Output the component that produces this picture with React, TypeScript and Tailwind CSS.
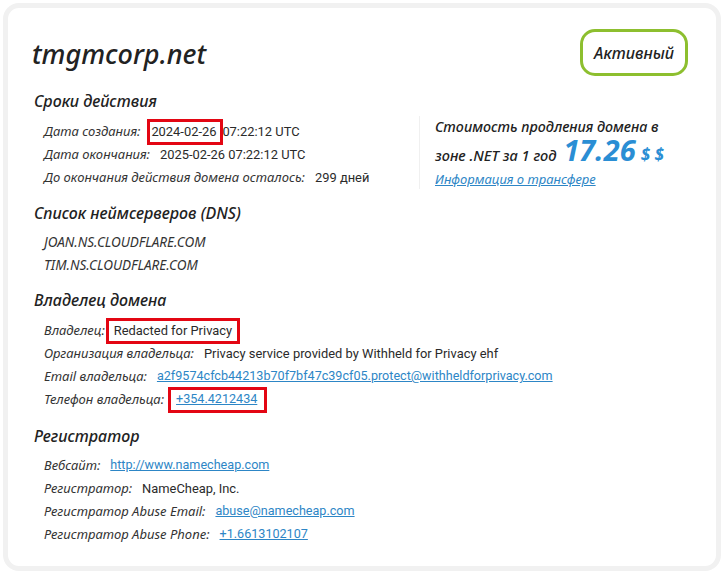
import React from "react";

const labelCls = "italic text-[#333] text-[13px] whitespace-nowrap [font-family:'Noto_Sans',sans-serif]";
const valCls = "text-[#2a2a2a] text-[12.9px] whitespace-nowrap [font-family:Roboto,sans-serif]";
const linkCls = "text-[#2d86c6] underline text-[12.6px] whitespace-nowrap [font-family:Roboto,sans-serif]";

function Row({ label, children }: { label: string; children: React.ReactNode }) {
  return (
    <div className="flex items-center h-[23px] gap-[10px]">
      <span className={labelCls}>{label}</span>
      {children}
    </div>
  );
}

function Heading({ children }: { children: React.ReactNode }) {
  return (
    <div className="h-[24px] flex items-center pl-[2px] italic text-[16px] font-medium text-[#222] [font-family:'Noto_Sans',sans-serif]">
      {children}
    </div>
  );
}

function RedBox({ children, className = "" }: { children: React.ReactNode; className?: string }) {
  return (
    <span className={"border-[3px] border-[#e30613] flex items-center whitespace-nowrap shrink-0 h-[26px] " + className}>
      {children}
    </span>
  );
}

export default function App() {
  return (
    <div className="w-[724px] h-[575px] bg-white pt-[3px] pl-[3px]">
      <div className="w-[718px] h-[568px] border-[5px] border-[#f1f1f1] rounded-[16px] bg-white pl-[24px] pr-[28px] pt-[21px]">
        <div className="flex items-center justify-between">
          <div className="mt-[2px] italic font-medium text-[27px] leading-[36px] text-[#222] [font-family:'Noto_Sans',sans-serif]">
            tmgmcorp.net
          </div>
          <div className="w-[108px] h-[47px] border-[3px] border-[#8dbf2f] rounded-[15px] flex items-center justify-center italic font-medium text-[16px] text-[#222] [font-family:'Noto_Sans',sans-serif]">
            Активный
          </div>
        </div>

        <div className="mt-[13px]">
          <Heading>Сроки действия</Heading>
          <div className="flex mt-[7px]">
            <div className="w-[387px] pl-[12px]">
              <div className="flex items-center h-[23px] gap-[7px]">
                <span className={labelCls}>Дата создания:</span>
                <span className="flex items-center">
                  <RedBox className="w-[76px] pl-[1px]"><span className={valCls}>2024-02-26</span></RedBox>
                  <span className={valCls + " -ml-[1px]"}>07:22:12 UTC</span>
                </span>
              </div>
              <Row label="Дата окончания:"><span className={valCls}>2025-02-26 07:22:12 UTC</span></Row>
              <Row label="До окончания действия домена осталось:"><span className={valCls}>299 дней</span></Row>
            </div>
            <div className="border-l border-[#f0f0f0] pl-[15px] -mt-[4px] h-[73px] flex flex-col">
              <div className="italic font-medium text-[14.3px] text-[#222] leading-[22px] whitespace-nowrap [font-family:'Noto_Sans',sans-serif]">
                Стоимость продления домена в
              </div>
              <div className="flex items-baseline italic font-medium text-[14.6px] text-[#222] leading-[24px] whitespace-nowrap [font-family:'Noto_Sans',sans-serif]">
                <span>зоне .NET за 1 год</span>
                <span className="ml-[7px] text-[29px] font-bold text-[#2a8ed4] leading-[24px]">17.26</span>
                <span className="ml-[5px] text-[17px] font-bold text-[#2a8ed4]">$ $</span>
              </div>
              <a className="mt-[3px] italic text-[13px] text-[#2d86c6] underline whitespace-nowrap [font-family:'Noto_Sans',sans-serif]">
                Информация о трансфере
              </a>
            </div>
          </div>
        </div>

        <div className="mt-[12px]">
          <Heading>Список неймсерверов (DNS)</Heading>
          <div className="mt-[6px] pl-[12px]">
            <div className={"h-[23px] flex items-center italic text-[#333] text-[13.5px] [font-family:'Noto_Sans',sans-serif]"}>JOAN.NS.CLOUDFLARE.COM</div>
            <div className={"h-[23px] flex items-center italic text-[#333] text-[13.5px] [font-family:'Noto_Sans',sans-serif]"}>TIM.NS.CLOUDFLARE.COM</div>
          </div>
        </div>

        <div className="mt-[11px]">
          <Heading>Владелец домена</Heading>
          <div className="mt-[7px] pl-[12px]">
            <div className="flex items-center h-[23px] gap-[1px]">
              <span className={labelCls}>Владелец:</span>
              <RedBox className="w-[134px] h-[25px] pl-[5px]"><span className={valCls}>Redacted for Privacy</span></RedBox>
            </div>
            <Row label="Организация владельца:"><span className={valCls}>Privacy service provided by Withheld for Privacy ehf</span></Row>
            <Row label="Email владельца:"><a className={linkCls}>a2f9574cfcb44213b70f7bf47c39cf05.protect@withheldforprivacy.com</a></Row>
            <div className="flex items-center h-[23px] gap-[4px]">
              <span className={labelCls}>Телефон владельца:</span>
              <RedBox className="w-[99px] h-[24px] pl-[5px]"><a className={linkCls}>+354.4212434</a></RedBox>
            </div>
          </div>
        </div>

        <div className="mt-[13px]">
          <Heading>Регистратор</Heading>
          <div className="mt-[6px] pl-[12px]">
            <Row label="Вебсайт:"><a className={linkCls}>http://www.namecheap.com</a></Row>
            <Row label="Регистратор:"><span className={valCls}>NameCheap, Inc.</span></Row>
            <Row label="Регистратор Abuse Email:"><a className={linkCls}>abuse@namecheap.com</a></Row>
            <Row label="Регистратор Abuse Phone:"><a className={linkCls}>+1.6613102107</a></Row>
          </div>
        </div>
      </div>
    </div>
  );
}
